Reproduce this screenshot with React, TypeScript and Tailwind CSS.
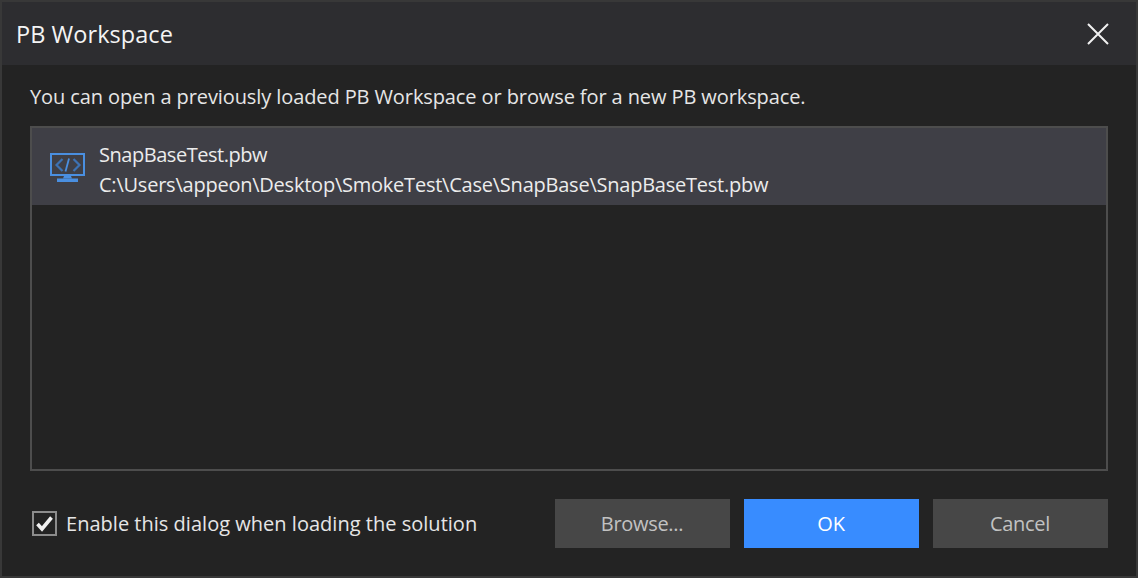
import React from 'react'

const MonitorIcon = () => (
  <svg width="36" height="30" viewBox="0 0 36 30" fill="none" className="mt-[3px] shrink-0">
    <rect x="1" y="1" width="33" height="21" stroke="#4a8fe0" strokeWidth="2" />
    <path d="M12.5 6l-6 6 6 6M23.5 6l6 6-6 6" stroke="#3d72b3" strokeWidth="2.2" />
    <path d="M19 5.5l-3.5 13" stroke="#4a8fe0" strokeWidth="1.8" />
    <path d="M14 23h7l1 2.5h-9z" fill="#4a8fe0" />
    <rect x="7" y="25.5" width="21" height="3.5" fill="#4a8fe0" />
  </svg>
)

const CheckBox = () => (
  <div className="flex h-[25px] w-[25px] items-center justify-center border-2 border-[#8c8c8c]">
    <svg width="19" height="17" viewBox="0 0 19 17" fill="none">
      <path d="M2.5 9l4.5 5L16.5 2.5" stroke="#f1f1f1" strokeWidth="3.6" />
    </svg>
  </div>
)

const Button = ({ label, primary }: { label: string; primary?: boolean }) => (
  <div
    className={
      primary
        ? 'flex h-[49px] w-[175px] items-center justify-center bg-[#388cff] pr-[1px] text-[20px] tracking-[-0.2px] text-white'
        : 'flex h-[49px] w-[175px] items-center justify-center bg-[#474747] pr-[1px] text-[20px] tracking-[-0.3px] text-[#c2c2c2]'
    }
  >
    {label}
  </div>
)

export default function App() {
  return (
    <div className="flex h-[578px] w-[1138px] flex-col border-2 border-[#383838] bg-[#232323] font-['Open_Sans','Noto_Sans',sans-serif] text-[#f1f1f1]">
      <div className="flex h-[63px] shrink-0 items-center justify-between bg-[#2d2d30] pl-[14px] pr-[27px]">
        <span className="pt-[2px] text-[23.5px] tracking-[0.05px] text-[#f4f4f4]">PB Workspace</span>
        <svg width="22" height="22" viewBox="0 0 22 22" fill="none">
          <path d="M1 1l20 20M21 1L1 21" stroke="#f1f1f1" strokeWidth="2" />
        </svg>
      </div>
      <div className="flex min-h-0 flex-1 flex-col pl-[28px] pr-[28px]">
        <div className="mt-[17px] h-[29px] text-[20px] leading-[29px] tracking-[-0.1px] text-[#e6e6e6]">
          You can open a previously loaded PB Workspace or browse for a new PB workspace.
        </div>
        <div className="mt-[15px] h-[345px] border-2 border-[#4d4d4d] bg-[#232323]">
          <div className="flex h-[77px] items-center gap-[13px] bg-[#3f3f46] pl-[18px]">
            <MonitorIcon />
            <div className="pt-[6px] text-[20px] leading-[30px] tracking-[-0.23px] text-[#ececec]">
              <div className="tracking-[-0.46px]">SnapBaseTest.pbw</div>
              <div>C:\Users\appeon\Desktop\SmokeTest\Case\SnapBase\SnapBaseTest.pbw</div>
            </div>
          </div>
        </div>
        <div className="mt-[28px] flex items-center justify-between">
          <div className="ml-[2px] flex items-center gap-[9px]">
            <CheckBox />
            <span className="text-[20px] tracking-[0.02px] text-[#e6e6e6]">
              Enable this dialog when loading the solution
            </span>
          </div>
          <div className="flex gap-[14px]">
            <Button label="Browse..." />
            <Button label="OK" primary />
            <Button label="Cancel" />
          </div>
        </div>
      </div>
    </div>
  )
}
